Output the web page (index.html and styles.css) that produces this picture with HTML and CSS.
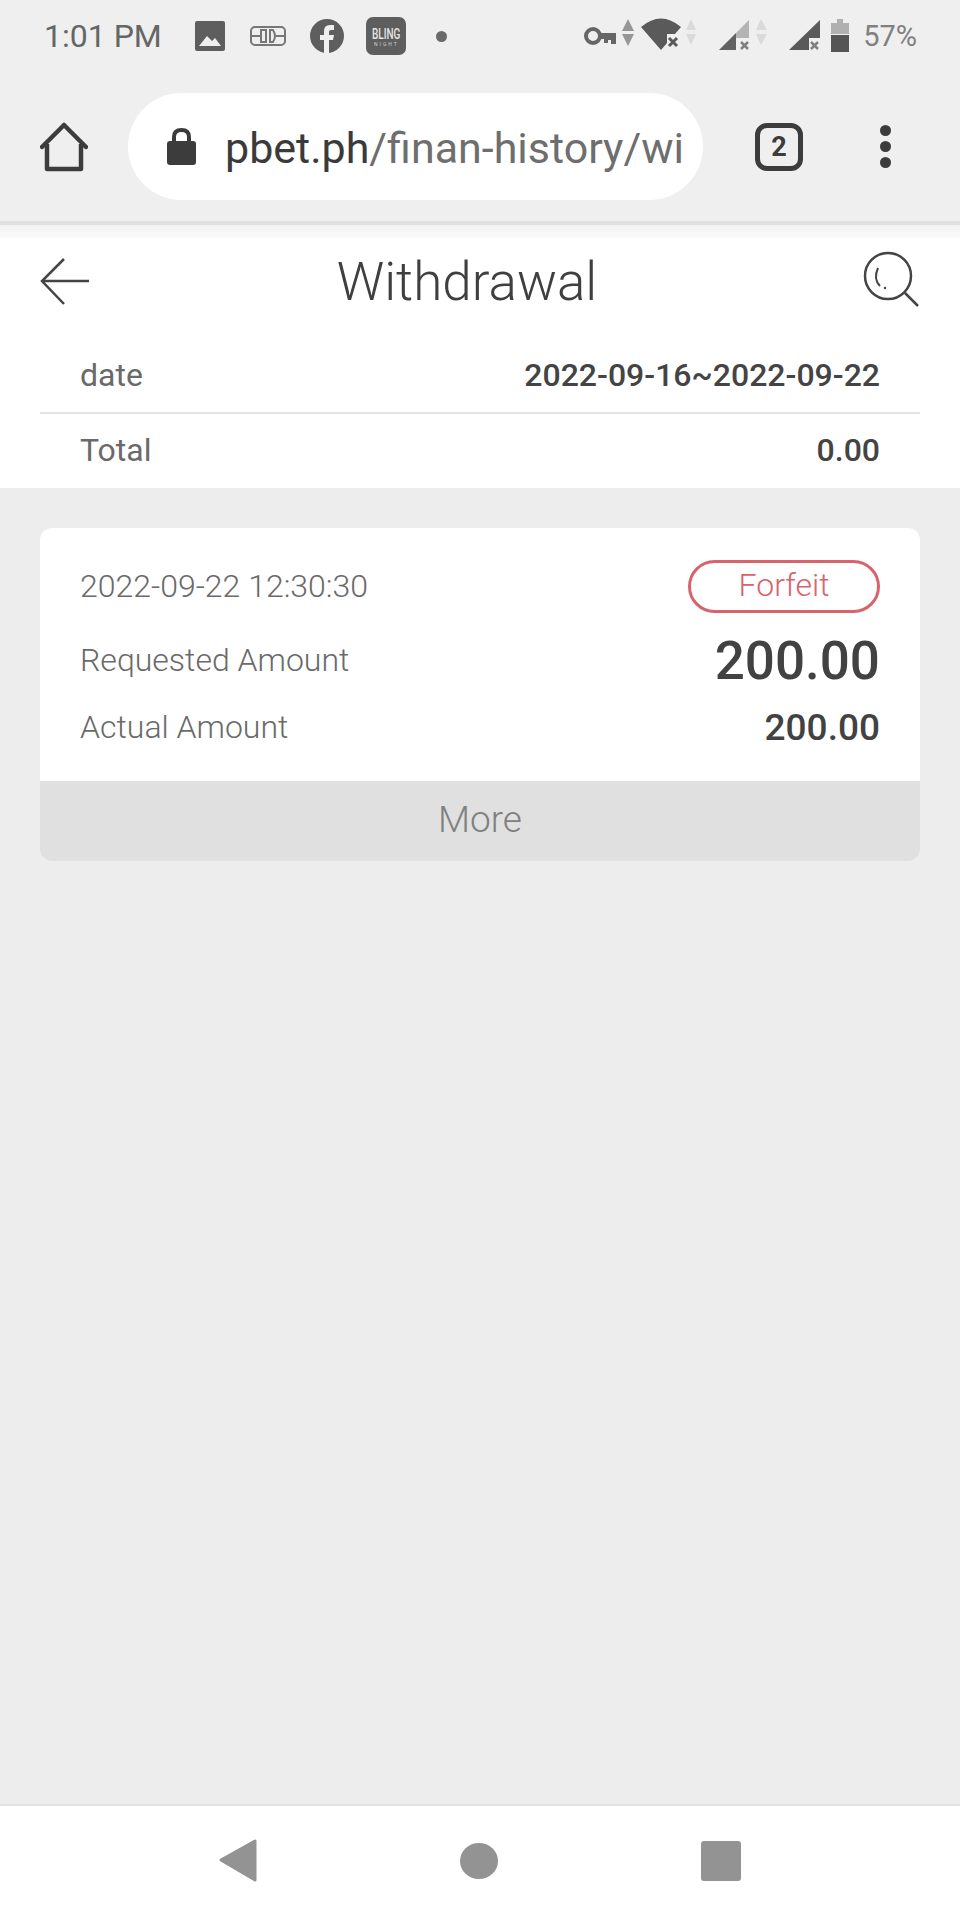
FILE: index.html
```html
<!DOCTYPE html>
<html lang="en">
<head>
    <meta charset="UTF-8">
    <meta name="viewport" content="width=device-width, initial-scale=1.0">
    <title>Withdrawal</title>
    <link rel="stylesheet" href="styles.css">
</head>
<body>
    <div class="chrome">
        <div class="status">
            <div class="time">1:01 PM</div>
            <div class="notifs">
                <svg width="30" height="30" viewBox="195 21 30 30">
                    <rect x="195" y="21" width="30" height="30" rx="2" fill="#5e5e5e"/>
                    <path d="M199 46 L207 36 L212 41 L215 38 L221 46 Z" fill="#efefef"/>
                </svg>
                <svg width="37" height="22" viewBox="249 25 37 22">
                    <rect x="251" y="27" width="34" height="18" rx="4" fill="none" stroke="#777" stroke-width="2"/>
                    <path d="M251 36 H260 M276 36 H285" stroke="#777" stroke-width="2"/>
                    <path d="M266 30 H261 V42 H266 Z M270 30 H273 Q277 36 273 42 H270 Z" fill="none" stroke="#777" stroke-width="2"/>
                </svg>
                <svg width="34" height="34" viewBox="310 19 34 34">
                    <circle cx="327" cy="36" r="17" fill="#5e5e5e"/>
                    <path d="M324 53 V40 H320 V35 H324 V31 Q324 25 330 25 H334 V30 H331 Q329 30 329 32 V35 H334 L333 40 H329 V53 Z" fill="#efefef"/>
                </svg>
                <svg class="bling" width="40" height="38" viewBox="366 17 40 38">
                    <rect x="366" y="17" width="40" height="38" rx="7" fill="#5e5e5e"/>
                    <text class="bling-name" transform="translate(372 39) scale(1 1.5)">BLING</text>
                    <text x="374" y="46" class="bling-sub">NIGHT</text>
                </svg>
                <span class="dot"></span>
            </div>
            <svg class="sys-icons" width="267" height="40" viewBox="583 16 267 40">
                <!-- vpn key -->
                <circle cx="593" cy="36" r="7" fill="none" stroke="#666" stroke-width="4"/>
                <path d="M599 33 H616 V44 H611 V40 H608 V43 H604 V39 H599 Z" fill="#666"/>
                <path d="M622 31 L628 19 L634 31 Z M622 34 L634 34 L628 46 Z" fill="#969696"/>
                <!-- wifi -->
                <path d="M641 27 Q661 10 681 27 L675 34 H667 V43 L661 50 Z" fill="#5a5a5a"/>
                <path d="M669 38 L677 46 M677 38 L669 46" stroke="#5a5a5a" stroke-width="3"/>
                <path d="M686 30 L691 19 L696 30 Z M686 34 L696 34 L691 45 Z" fill="#dadada"/>
                <!-- signal one -->
                <path d="M736 33 L749 20 V38 H736 Z" fill="#b4b4b4"/>
                <path d="M719 50 L736 33 V50 Z" fill="#626262"/>
                <path d="M741 42 L748 49 M748 42 L741 49" stroke="#808080" stroke-width="2.5"/>
                <path d="M756 30 L761 19 L767 30 Z M756 34 L767 34 L761 45 Z" fill="#dadada"/>
                <!-- signal two -->
                <path d="M789 50 L820 20 V38 H809 V50 Z" fill="#5a5a5a"/>
                <path d="M811 42 L818 49 M818 42 L811 49" stroke="#808080" stroke-width="2.5"/>
                <!-- battery -->
                <path d="M837 19 H843 V23 H849 V34 H831 V23 H837 Z" fill="#b0b0b0"/>
                <rect x="831" y="35" width="18" height="17" fill="#555"/>
            </svg>
            <div class="battery-level">57%</div>
        </div>
        <div class="toolbar">
            <svg width="48" height="50" viewBox="40 122 48 50">
                <path d="M42 147 L64 125 L86 147" fill="none" stroke="#3c3c3c" stroke-width="4.500" stroke-linecap="round" stroke-linejoin="round"/>
                <path d="M47 144 V169 H81 V144" fill="none" stroke="#3c3c3c" stroke-width="4.500" stroke-linejoin="round"/>
            </svg>
            <div class="urlbar">
                <svg width="30" height="38" viewBox="167 127 30 38">
                    <path d="M174 141 V136 Q174 129 181.500 129 Q189 129 189 136 V141" fill="none" stroke="#3c3c3c" stroke-width="4"/>
                    <rect x="167" y="140" width="29" height="24" rx="3" fill="#3c3c3c"/>
                </svg>
                <div class="url"><span class="host">pbet.ph</span>/finan-history/wi</div>
            </div>
            <div class="tab-count">2</div>
            <div class="menu-dots">
                <span></span>
                <span></span>
                <span></span>
            </div>
        </div>
    </div>
    <div class="strip"></div>

    <div class="head">
        <div class="titlebar">
            <svg width="50" height="50" viewBox="40 256 50 50">
                <path d="M89 281 H43 M64 259 L42 281 L64 304" fill="none" stroke="#444" stroke-width="2.500"/>
            </svg>
            <div class="title">Withdrawal</div>
            <svg width="58" height="66" viewBox="862 248 58 66">
                <circle cx="888" cy="276" r="23" fill="none" stroke="#444" stroke-width="2.500"/>
                <path d="M905 293 L918 306" stroke="#444" stroke-width="2.500"/>
                <path d="M878 268 Q873 279 880 286" fill="none" stroke="#444" stroke-width="2"/>
                <circle cx="885" cy="288" r="1.200" fill="#444"/>
            </svg>
        </div>
        <div class="info">
            <div class="info-row">
                <span>date</span>
                <span class="info-value">2022-09-16~2022-09-22</span>
            </div>
            <div class="info-row">
                <span>Total</span>
                <span class="info-value">0.00</span>
            </div>
        </div>
    </div>

    <div class="list">
        <div class="card">
            <div class="card-body">
                <div class="card-row row-date">
                    <span class="card-date">2022-09-22 12:30:30</span>
                    <span class="badge">Forfeit</span>
                </div>
                <div class="card-row row-requested">
                    <span>Requested Amount</span>
                    <span class="amount-big">200.00</span>
                </div>
                <div class="card-row row-actual">
                    <span>Actual Amount</span>
                    <span class="amount">200.00</span>
                </div>
            </div>
            <div class="more">More</div>
        </div>
    </div>

    <div class="navbar">
        <svg width="38" height="44" viewBox="218 1840 38 44">
            <path d="M254 1842 V1881 L220 1861 Z" fill="#939393" stroke="#939393" stroke-width="3" stroke-linejoin="round"/>
        </svg>
        <span class="nav-circle"></span>
        <span class="nav-square"></span>
    </div>
</body>
</html>
```

FILE: styles.css
```css
* {
    box-sizing: border-box;
}

body {
    display: flex;
    flex-direction: column;
    width: 960px;
    height: 1920px;
    margin: 0;
    overflow: hidden;
    background-color: #ededed;
    font-family: Roboto, "Liberation Sans", sans-serif;
    color: #6a6a6a;
}

svg {
    display: block;
    flex-shrink: 0;
}

.chrome {
    height: 225px;
    background-color: #efefef;
    border-bottom: 4px solid #e0e0e0;
}

.status {
    display: flex;
    align-items: center;
    height: 72px;
    padding: 0 43px 0 44px;
}

.time {
    width: 151px;
    font-size: 32px;
    font-weight: 400;
    color: #666;
    white-space: nowrap;
}

.notifs {
    display: flex;
    align-items: center;
    gap: 24px;
}

.bling {
    margin-left: -2px;
}

.bling-name {
    font-size: 10px;
    font-weight: 500;
    fill: #e4e4e4;
}

.bling-sub {
    font-size: 5px;
    letter-spacing: 2px;
    fill: #d0d0d0;
}

.dot {
    width: 11px;
    height: 11px;
    margin-left: 6px;
    border-radius: 50%;
    background-color: #6a6a6a;
}

.sys-icons {
    margin-left: auto;
}

.battery-level {
    margin-left: 13px;
    font-size: 29px;
    color: #808080;
}

.toolbar {
    display: flex;
    align-items: center;
    padding: 21px 0 0 40px;
}

.urlbar {
    display: flex;
    align-items: center;
    width: 575px;
    height: 107px;
    margin-left: 40px;
    padding-left: 39px;
    border-radius: 54px;
    background-color: white;
}

.url {
    width: 454px;
    margin: 2px 0 0 28px;
    white-space: nowrap;
    font-size: 43px;
    color: #6e6e6e;
}

.host {
    color: #3a3a3a;
}

.tab-count {
    display: flex;
    align-items: center;
    justify-content: center;
    width: 48px;
    height: 48px;
    margin-left: 52px;
    border: 5px solid #3c3c3c;
    border-radius: 12px;
    font-size: 27px;
    font-weight: 700;
    color: #3c3c3c;
}

.menu-dots {
    display: flex;
    flex-direction: column;
    gap: 5px;
    margin-left: 77px;
}

.menu-dots span {
    width: 11px;
    height: 11px;
    border-radius: 50%;
    background-color: #3c3c3c;
}

.strip {
    height: 13px;
    background: linear-gradient(#f3f3f3, #fafafa);
}

.head {
    background-color: white;
}

.titlebar {
    display: flex;
    align-items: center;
    justify-content: space-between;
    height: 100px;
    padding: 0 40px 14px;
}

.title {
    margin: 2px 18px 0 0;
    font-size: 53px;
    font-weight: 300;
    color: #3f3f3f;
}

.info {
    margin: 0 40px;
}

.info-row {
    display: flex;
    align-items: center;
    justify-content: space-between;
    height: 74px;
    padding: 0 40px 2px;
    font-size: 32px;
}

.info-row:first-child {
    height: 76px;
    padding-bottom: 0;
    border-bottom: 2px solid #e4e4e4;
}

.info-value {
    font-weight: 500;
    color: #444;
}

.list {
    flex: 1;
    padding: 40px;
}

.card {
    overflow: hidden;
    border-radius: 12px;
    background-color: white;
}

.card-body {
    height: 253px;
    padding: 32px 40px 0;
    font-size: 32px;
    font-weight: 300;
}

.card-row {
    display: flex;
    align-items: center;
    justify-content: space-between;
}

.card-date {
    margin-bottom: 2px;
}

.row-date {
    height: 53px;
}

.row-requested {
    height: 94px;
}

.row-actual {
    height: 40px;
}

.badge {
    width: 192px;
    height: 53px;
    border: 3px solid #d9636c;
    border-radius: 27px;
    line-height: 45px;
    text-align: center;
    color: #d9636c;
}

.amount-big {
    margin-top: 2px;
    font-size: 53px;
    font-weight: 500;
    color: #424242;
}

.amount {
    font-size: 37px;
    font-weight: 500;
    color: #424242;
}

.more {
    height: 80px;
    background-color: #e0e0e0;
    font-size: 37px;
    font-weight: 300;
    line-height: 78px;
    text-align: center;
    color: #808080;
}

.navbar {
    display: flex;
    align-items: center;
    justify-content: center;
    gap: 203px;
    height: 116px;
    padding-bottom: 4px;
    border-top: 2px solid #e2e2e2;
    background-color: white;
}

.nav-circle {
    width: 38px;
    height: 36px;
    border-radius: 50%;
    background-color: #939393;
}

.nav-square {
    width: 40px;
    height: 40px;
    border-radius: 3px;
    background-color: #939393;
}
```
